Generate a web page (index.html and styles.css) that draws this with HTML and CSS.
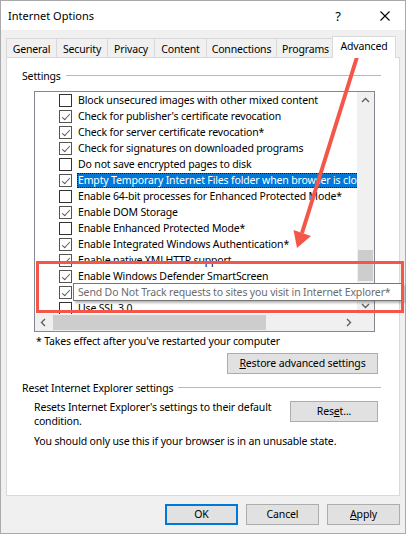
FILE: index.html
```html
<!DOCTYPE html>
<html lang="en">
<head>
<meta charset="utf-8">
<title>Internet Options</title>
<link rel="stylesheet" href="styles.css">
</head>
<body>
<div class="window">
  <div class="titlebar">
    <span class="title">Internet Options</span>
    <span class="help">?</span>
    <span class="close"><svg width="10" height="10" viewBox="0 0 10 10"><path d="M0.5 0.5 L9.5 9.5 M9.5 0.5 L0.5 9.5" stroke="#000" stroke-width="1.1" fill="none"/></svg></span>
  </div>
  <div class="body">
    <div class="tabs">
      <div class="tab w-general">General</div>
      <div class="tab w-security">Security</div>
      <div class="tab w-privacy">Privacy</div>
      <div class="tab w-content">Content</div>
      <div class="tab w-connections">Connections</div>
      <div class="tab w-programs">Programs</div>
      <div class="tab active">Advanced</div>
    </div>
    <div class="panel">
      <div class="group-head"><span>Settings</span><i class="rule"></i></div>
      <div class="listbox">
        <div class="rows">
          <div class="row"><span class="cb"></span><span class="lbl">Block unsecured images with other mixed content</span></div>
          <div class="row"><span class="cb on"></span><span class="lbl">Check for publisher's certificate revocation</span></div>
          <div class="row"><span class="cb on"></span><span class="lbl">Check for server certificate revocation*</span></div>
          <div class="row"><span class="cb on"></span><span class="lbl">Check for signatures on downloaded programs</span></div>
          <div class="row"><span class="cb"></span><span class="lbl">Do not save encrypted pages to disk</span></div>
          <div class="row"><span class="cb on"></span><span class="lbl selected">Empty Temporary Internet Files folder when browser is closed</span></div>
          <div class="row"><span class="cb"></span><span class="lbl">Enable 64-bit processes for Enhanced Protected Mode*</span></div>
          <div class="row"><span class="cb on"></span><span class="lbl">Enable DOM Storage</span></div>
          <div class="row"><span class="cb"></span><span class="lbl">Enable Enhanced Protected Mode*</span></div>
          <div class="row"><span class="cb on"></span><span class="lbl">Enable Integrated Windows Authentication*</span></div>
          <div class="row"><span class="cb on"></span><span class="lbl">Enable native XMLHTTP support</span></div>
          <div class="row"><span class="cb on"></span><span class="lbl">Enable Windows Defender SmartScreen</span></div>
          <div class="row"><span class="cb on"></span><span class="lbl">Send Do Not Track requests to sites you visit in Internet Explorer*</span></div>
          <div class="row"><span class="cb"></span><span class="lbl">Use SSL 3.0</span></div>
        </div>
        <div class="vscroll">
          <div class="sbtn"><svg width="17" height="17" viewBox="0 0 17 17"><path d="M5 10 L8.5 6.5 L12 10" stroke="#606060" stroke-width="1.4" fill="none"/></svg></div>
          <div class="vtrack"><div class="vthumb"></div></div>
          <div class="sbtn"><svg width="17" height="17" viewBox="0 0 17 17"><path d="M5 7 L8.5 10.5 L12 7" stroke="#606060" stroke-width="1.4" fill="none"/></svg></div>
        </div>
        <div class="hscroll">
          <div class="sbtn"><svg width="17" height="17" viewBox="0 0 17 17"><path d="M10 5 L6.5 8.5 L10 12" stroke="#606060" stroke-width="1.4" fill="none"/></svg></div>
          <div class="htrack"><div class="hthumb"></div></div>
          <div class="sbtn"><svg width="17" height="17" viewBox="0 0 17 17"><path d="M7 5 L10.5 8.5 L7 12" stroke="#606060" stroke-width="1.4" fill="none"/></svg></div>
        </div>
        <div class="corner"></div>
      </div>
      <p class="note">* Takes effect after you've restarted your computer</p>
      <div class="restore-row"><button class="btn restore"><span><u>R</u>estore advanced settings</span></button></div>
      <div class="group-head reset-head"><span>Reset Internet Explorer settings</span><i class="rule"></i></div>
      <div class="reset-body">
        <p>Resets Internet Explorer's settings to their default<br>condition.</p>
        <button class="btn reset"><span>Res<u>e</u>t...</span></button>
      </div>
      <p class="warn">You should only use this if your browser is in an unusable state.</p>
    </div>
    <div class="footer">
      <button class="btn foot default">OK</button>
      <button class="btn foot">Cancel</button>
      <button class="btn foot"><span><u>A</u>pply</span></button>
    </div>
  </div>

  <div class="tooltip">Send Do Not Track requests to sites you visit in Internet Explorer*</div>
  <div class="highlight-box"></div>
  <svg class="arrow" width="406" height="534" viewBox="0 0 406 534">
    <path d="M357 57 L302 233" stroke="#f4574a" stroke-width="4" fill="none"/>
    <path d="M293.5 230 L311 236 L297 248 Z" fill="#f4574a"/>
  </svg>
</div>
</body>
</html>
```
FILE: styles.css
```css
* { box-sizing: border-box; }
html, body { margin: 0; padding: 0; }
body {
  width: 406px;
  height: 534px;
  overflow: hidden;
  font-family: "Noto Sans", "Segoe UI", sans-serif;
  font-size: 10.5px;
  letter-spacing: -0.15px;
  color: #000;
  background: #fff;
}
.window {
  position: relative;
  width: 406px;
  height: 534px;
  border: 1px solid #aaaaaa;
  display: flex;
  flex-direction: column;
  background: #f0f0f0;
}
.titlebar {
  height: 29px;
  flex: none;
  background: #fff;
  display: flex;
  align-items: center;
  padding-left: 7px;
}
.title { flex: 1; font-size: 11px; letter-spacing: 0; }
.help { width: 54px; text-align: center; font-size: 13px; line-height: 16px; }
.close { width: 40px; display: flex; justify-content: center; align-items: center; }
.body {
  flex: 1;
  display: flex;
  flex-direction: column;
  padding: 6px 5px 0;
}
.tabs {
  height: 21px;
  flex: none;
  display: flex;
  align-items: flex-end;
  position: relative;
  z-index: 1;
}
.tab {
  height: 19px;
  margin-right: -1px;
  border: 1px solid #d9d9d9;
  border-bottom: none;
  background: #f0f0f0;
  text-align: center;
  padding-top: 2px;
  line-height: 16px;
  white-space: nowrap;
}
.w-general { width: 51px; }
.w-security { width: 52px; }
.w-privacy { width: 48px; }
.w-content { width: 53px; }
.w-connections { width: 71px; }
.w-programs { width: 59px; }
.tab.active {
  width: 64px;
  height: 22px;
  margin-left: -2px;
  margin-bottom: -1px;
  background: #fff;
  padding-top: 1px;
}
.panel {
  flex: none;
  height: 439px;
  border: 1px solid #d9d9d9;
  background: #fff;
  display: flex;
  flex-direction: column;
}
.group-head {
  display: flex;
  align-items: center;
  gap: 5px;
  height: 15px;
  margin: 10px 18px 0 15px;
  white-space: nowrap;
}
.rule { flex: 1; height: 1px; background: #b9b9b9; }
.listbox {
  width: 341px;
  height: 241px;
  margin: 8px 0 0 27px;
  border: 1px solid #828790;
  display: grid;
  grid-template-columns: 322px 17px;
  grid-template-rows: 222px 17px;
  background: #fff;
}
.rows { overflow: hidden; }
.row {
  height: 16px;
  display: flex;
  align-items: center;
  padding-left: 24px;
  white-space: nowrap;
}
.cb {
  position: relative;
  flex: none;
  width: 13px;
  height: 13px;
  border: 1px solid #333;
  background: #fff;
  margin-right: 5px;
}
.cb.on { border-color: #555; }
.cb.on::after {
  content: "";
  position: absolute;
  left: 3.5px;
  top: 1px;
  width: 3px;
  height: 7px;
  border: solid #555;
  border-width: 0 1.2px 1.2px 0;
  transform: rotate(42deg);
}
.lbl { line-height: 15px; padding: 0 1px; }
.lbl.selected {
  background: #0078d7;
  color: #fff;
  outline: 1px dotted #1a1a1a;
  outline-offset: -1px;
}
.vscroll {
  background: #f0f0f0;
  display: flex;
  flex-direction: column;
}
.sbtn { width: 17px; height: 17px; flex: none; display: flex; }
.vtrack { flex: 1; }
.vthumb { margin: 141px 1px 0; height: 31px; background: #cdcdcd; }
.hscroll {
  background: #f0f0f0;
  display: flex;
}
.htrack { flex: 1; }
.hthumb { margin: 1px 0 0 1px; width: 213px; height: 15px; background: #cdcdcd; }
.corner { background: #f0f0f0; }
.note {
  margin: 2px 0 0 29px;
  line-height: 15px;
}
.restore-row {
  display: flex;
  justify-content: flex-end;
  margin: 4px 21px 0 0;
}
.btn {
  height: 21px;
  border: 1px solid #adadad;
  background: #e1e1e1;
  font: inherit;
  letter-spacing: inherit;
  color: #000;
  padding: 0;
  display: flex;
  align-items: center;
  justify-content: center;
  line-height: 15px;
}
.restore { width: 151px; }
.reset-head { margin-top: 6px; }
.reset-body {
  display: flex;
  justify-content: space-between;
  margin: 5px 21px 0 27px;
}
.reset-body p { margin: 0; line-height: 14px; white-space: nowrap; }
.reset { width: 88px; margin-top: 1px; }
.warn { margin: 6px 0 0 27px; line-height: 14px; }
.footer {
  display: flex;
  justify-content: flex-end;
  gap: 8px;
  margin-top: 8px;
}
.foot { width: 73px; }
.foot.default { border: 2px solid #0078d7; }
.tooltip {
  position: absolute;
  left: 72px;
  top: 282px;
  width: 330px;
  height: 18px;
  background: #fff;
  border: 1px solid #767676;
  box-shadow: 2px 2px 2px rgba(0,0,0,0.28);
  color: #6b6b6b;
  padding-left: 4px;
  line-height: 16px;
  white-space: nowrap;
}
.highlight-box {
  position: absolute;
  left: 35px;
  top: 260px;
  width: 368px;
  height: 52px;
  border: 3px solid #f4574a;
}
.arrow {
  position: absolute;
  left: -1px;
  top: -1px;
  pointer-events: none;
}
```
